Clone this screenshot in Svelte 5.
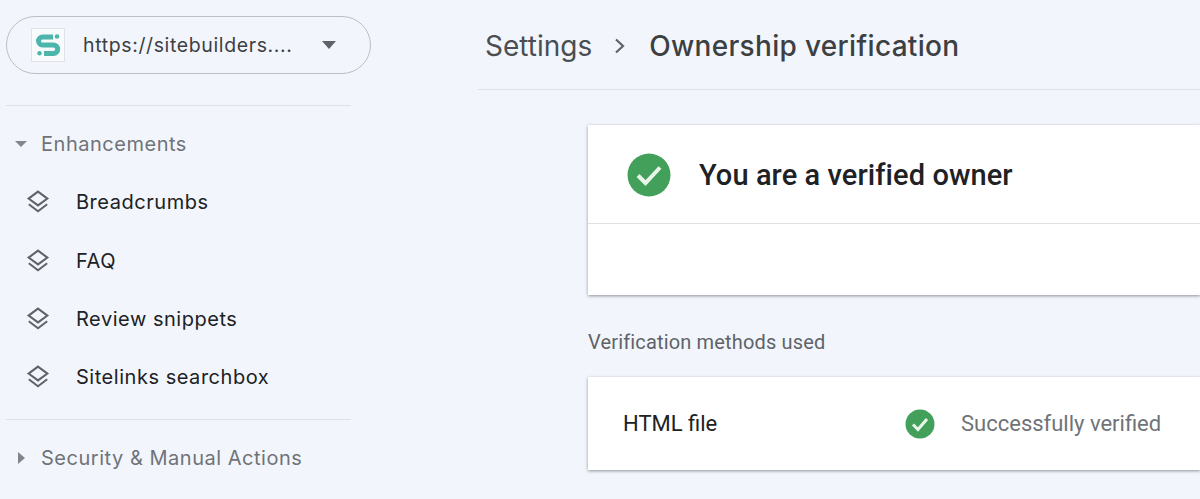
<script>
	const items = ['Breadcrumbs', 'FAQ', 'Review snippets', 'Sitelinks searchbox'];
</script>

<div class="page">
	<aside class="sidebar">
		<div class="picker">
			<span class="logo">
				<svg width="32" height="32" viewBox="0 0 32 32">
					<path d="M21 8H10.5a4 4 0 0 0 0 8h11a4.2 4.2 0 0 1 0 8.4H12" fill="none" stroke="#4db6ac" stroke-width="5" />
					<circle cx="25" cy="7.5" r="2.3" fill="#4db6ac" />
					<circle cx="7.5" cy="24.2" r="2.2" fill="#4db6ac" />
				</svg>
			</span>
			<span class="url">https://sitebuilders....</span>
			<span class="caret"></span>
		</div>
		<hr class="first" />
		<div class="section open">
			<span class="arrow-down"></span>
			<span>Enhancements</span>
		</div>
		<ul>
			{#each items as item}
				<li>
					<svg width="26" height="26" viewBox="0 0 26 26" fill="none" stroke="#5f6368" stroke-width="2">
						<path d="M13 2.6 22.4 9.6 13 16.4 3.6 9.6Z" />
						<path d="M3.8 15.2 13 22.2l9.2-7" />
					</svg>
					<span>{item}</span>
				</li>
			{/each}
		</ul>
		<hr class="second" />
		<div class="section closed">
			<span class="arrow-right"></span>
			<span>Security &amp; Manual Actions</span>
		</div>
	</aside>

	<main>
		<header>
			<span class="crumb">Settings</span>
			<svg class="chevron" width="14" height="18" viewBox="0 0 14 18" fill="none" stroke="#5f6368" stroke-width="2.2">
				<path d="M3 2.5 10 9l-7 6.5" />
			</svg>
			<span class="current">Ownership verification</span>
		</header>

		<div class="content">
			<section class="card owner">
				<div class="owner-head">
					<svg width="44" height="44" viewBox="0 0 44 44">
						<circle cx="22" cy="22" r="21.5" fill="#43a05a" />
						<path d="M11 22.5 18.5 30 33 14.5" fill="none" stroke="#e8f5e9" stroke-width="4" />
					</svg>
					<h1>You are a verified owner</h1>
				</div>
				<div class="owner-foot"></div>
			</section>

			<p class="label">Verification methods used</p>

			<section class="card method">
				<span class="name">HTML file</span>
				<span class="status">
					<svg width="30" height="30" viewBox="0 0 30 30">
						<circle cx="15" cy="15" r="14.5" fill="#43a05a" />
						<path d="M8 15.5 13 20.5 22 10" fill="none" stroke="#e8f5e9" stroke-width="3" />
					</svg>
					<span>Successfully verified</span>
				</span>
			</section>
		</div>
	</main>
</div>

<style>
	:global(body) {
		background: #f2f6fc;
		overflow: hidden;
	}
	.page {
		display: flex;
		width: 1200px;
		height: 499px;
		overflow: hidden;
		background: #f2f6fc;
		font-family: Roboto, sans-serif;
	}
	.sidebar {
		width: 478px;
		flex: none;
		padding: 16px 0 0 6px;
		box-sizing: border-box;
	}
	.picker {
		display: flex;
		align-items: center;
		width: 365px;
		height: 58px;
		box-sizing: border-box;
		border: 1px solid #bcc0c6;
		border-radius: 29px;
		padding-left: 24px;
	}
	.logo {
		display: flex;
		align-items: center;
		justify-content: center;
		width: 34px;
		height: 34px;
		box-sizing: border-box;
		border: 1px solid #dfe3e8;
		background: #f8fafc;
		flex: none;
	}
	.url {
		margin-left: 18px;
		width: 218px;
		font-family: Inter, sans-serif;
		font-size: 19.5px;
		letter-spacing: 0.62px;
		color: #3c4043;
		white-space: nowrap;
	}
	.caret {
		margin-left: 21px;
		border-left: 7.5px solid transparent;
		border-right: 7.5px solid transparent;
		border-top: 8px solid #5f6368;
	}
	hr {
		width: 345px;
		height: 1px;
		margin: 0;
		border: 0;
		background: #dde1e6;
	}
	hr.first {
		margin-top: 31px;
	}
	.section {
		display: flex;
		align-items: center;
		font-family: Inter, sans-serif;
		font-size: 20px;
		letter-spacing: 0.52px;
		color: #6f7378;
		white-space: nowrap;
	}
	.section.open {
		margin-top: 24px;
		height: 28px;
	}
	.section.closed {
		margin-top: 24px;
		height: 28px;
	}
	.arrow-down {
		margin: 0 14px 0 9px;
		border-left: 6px solid transparent;
		border-right: 6px solid transparent;
		border-top: 6px solid #80868b;
	}
	.arrow-right {
		margin: 0 16px 0 12px;
		border-top: 6px solid transparent;
		border-bottom: 6px solid transparent;
		border-left: 7px solid #80868b;
	}
	ul {
		list-style: none;
		margin: 15px 0 0;
		padding: 0 0 12px;
	}
	li {
		display: flex;
		align-items: center;
		height: 58.4px;
		padding-left: 19px;
		font-family: Inter, sans-serif;
		font-size: 20px;
		letter-spacing: 0.53px;
		color: #202124;
		white-space: nowrap;
	}
	li svg {
		margin-right: 25px;
		flex: none;
	}
	main {
		flex: 1;
		min-width: 0;
	}
	header {
		display: flex;
		align-items: center;
		height: 90px;
		padding: 2px 0 0 7px;
		box-sizing: border-box;
		border-bottom: 1px solid #dde1e6;
		font-family: Inter, sans-serif;
		font-size: 28px;
		color: #3c4043;
	}
	.crumb {
		color: #4a4e52;
	}
	.chevron {
		margin: 0 22px 0 21px;
	}
	.current {
		font-weight: 500;
		letter-spacing: 0.32px;
	}
	.content {
		padding: 35px 0 0 110px;
	}
	.card {
		background: #fff;
		box-shadow: 0 1px 3px rgba(60, 64, 67, 0.55);
	}
	.owner-head {
		display: flex;
		align-items: center;
		height: 99px;
		padding: 2px 0 0 39px;
		box-sizing: border-box;
		border-bottom: 1px solid #dfe1e4;
	}
	.owner-head h1 {
		margin: 0 0 0 28px;
		font-size: 29px;
		font-weight: 500;
		letter-spacing: 0.08px;
		color: #202124;
	}
	.owner-foot {
		height: 71px;
	}
	.label {
		margin: 35px 0 0;
		height: 23px;
		line-height: 24px;
		font-size: 20px;
		letter-spacing: 0.16px;
		color: #5f6368;
	}
	.method {
		display: flex;
		align-items: center;
		height: 93px;
		margin-top: 24px;
		padding-left: 35px;
		font-size: 22px;
	}
	.name {
		width: 282px;
		color: #202124;
	}
	.status {
		display: flex;
		align-items: center;
		gap: 26px;
		color: #6f7378;
	}
</style>
